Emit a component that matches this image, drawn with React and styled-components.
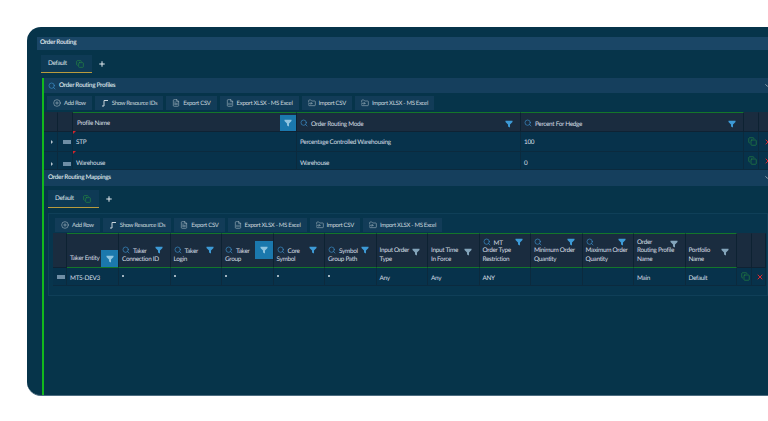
import styled, { createGlobalStyle } from "styled-components";
import { ChevronDown, CirclePlus, Copy, FileSpreadsheet, FileText, FolderInput, Plus, Search, X } from "lucide-react";

const Global = createGlobalStyle`
  html, body { margin: 0; padding: 0; background: #fff; overflow: hidden; }
  * { box-sizing: border-box; }
`;

const Page = styled.div`
  width: 768px;
  height: 421px;
  padding: 27px 0 0 27px;
  overflow: hidden;
  font-family: Lato, "Noto Sans", sans-serif;
  font-size: 6.4px;
  letter-spacing: -0.3px;
  text-rendering: geometricPrecision;
  color: #d5dee4;
`;

const Panel = styled.div`
  width: 741px;
  height: 369px;
  padding: 10px 0 0 10px;
  background: #06344a;
  border-radius: 14px 0 0 14px;
  border-bottom: 1px solid #4d6d80;
  overflow: hidden;
`;

const TitleBar = styled.div`
  height: 13px;
  background: #1a4666;
  padding: 0 0 3px 3px;
  display: flex;
  align-items: center;
  font-weight: 600;
  color: #e2e9ee;
`;

const Tabs = styled.div`
  height: 18px;
  margin: ${(p) => p.$top}px 0 0 ${(p) => p.$left}px;
  display: flex;
  align-items: center;
  gap: 6px;
`;

const Tab = styled.div`
  width: 51px;
  height: 18px;
  padding-left: 7px;
  display: flex;
  align-items: center;
  gap: 9px;
  background: #0e3a55;
  border-bottom: 1.5px solid #b99b3d;
  color: #dbe3e8;
`;

const Rail = styled.div`
  margin: 5px 0 0 5px;
  border-left: 2px solid #12b81c;
  height: 318px;
`;

const SectionBar = styled.div`
  height: ${(p) => p.$h}px;
  background: #153f5d;
  padding: 0 0 ${(p) => p.$lift || 0}px ${(p) => p.$pad}px;
  display: flex;
  align-items: center;
  font-weight: 600;
  color: #dbe3e8;
`;

const SectionTitle = styled.span`
  flex: 1;
`;

const Toolbar = styled.div`
  height: ${(p) => p.$h}px;
  padding: ${(p) => p.$pad};
  display: flex;
  align-items: center;
  gap: 3px;
`;

const ToolButton = styled.div`
  height: 14px;
  padding: 1px 6px 0;
  display: flex;
  align-items: center;
  gap: 3px;
  background: #123c58;
  font-size: 6px;
  white-space: nowrap;
  color: #c9d5dc;
`;

const Grid = styled.div`
  display: grid;
  grid-template-columns: ${(p) => p.$cols};
  width: max-content;
`;

const HeadCell = styled.div`
  height: ${(p) => p.$h}px;
  background: #1a2c3f;
  border-top: 1px solid ${(p) => (p.$plain ? "#1a2c3f" : "#14762a")};
  border-bottom: 1px solid ${(p) => (p.$mapped ? "#14762a" : "#0f2233")};
  border-right: 1px solid #0d2232;
  display: flex;
  align-items: flex-end;
  padding-left: ${(p) => p.$pad || 3}px;
  color: #d5dee4;
`;

const HeadInner = styled.div`
  width: 100%;
  display: flex;
  align-items: flex-start;
  justify-content: space-between;
  line-height: 8.3px;
  padding-bottom: ${(p) => p.$bottom}px;
`;

const HeadLabel = styled.span`
  display: block;
  flex: 1;
  min-width: 0;
  white-space: pre;
  padding-top: ${(p) => p.$top || 0}px;
`;

const SearchMark = styled(Search)`
  display: inline-block;
  color: #3d8fca;
  vertical-align: -1.5px;
  margin-right: 3px;
`;

const FilterBox = styled.span`
  flex: none;
  width: ${(p) => (p.$active ? p.$size : 16)}px;
  height: ${(p) => (p.$active ? p.$size : 9)}px;
  margin: ${(p) => (p.$active ? `-${p.$lift}px 0 -${p.$drop}px 0` : "0 3px 0 0")};
  display: flex;
  align-items: center;
  justify-content: center;
  background: ${(p) => (p.$active ? "#1b78ad" : "transparent")};
`;

const Funnel = ({ color }) => (
  <svg width="8" height="8" viewBox="0 0 8 8" aria-hidden="true">
    <path d="M0.5 0.8h7v1.2L5 4.5V7.6L3 6.6V4.5L0.5 2z" fill={color} />
  </svg>
);

const BodyCell = styled.div`
  height: ${(p) => p.$h}px;
  border-right: 1px solid #0b2a3e;
  border-bottom: 1px solid #0b2a3e;
  background: #07324b;
  padding: ${(p) => p.$top || 0}px 0 0 3px;
  display: flex;
  align-items: center;
  justify-content: ${(p) => (p.$center ? "center" : "flex-start")};
  position: relative;
  color: #d5dee4;
`;

const RedCorner = styled.i`
  position: absolute;
  left: 0;
  top: -1px;
  border-top: 3px solid #d1242b;
  border-right: 3px solid transparent;
`;

const Dot = styled.i`
  width: 2px;
  height: 2px;
  margin-top: -2px;
  border-radius: 50%;
  background: #d5dee4;
`;

const Arrow = styled.i`
  border-left: 2.5px solid #b6c4ce;
  border-top: 2px solid transparent;
  border-bottom: 2px solid transparent;
`;

const RowMark = styled.i`
  width: 8px;
  height: 4px;
  background: #6f8ea5;
`;

const Mapped = styled.div`
  margin: 5px 0 0 4px;
  height: 83px;
  padding: 3px 0 0 4px;
  border: 1px solid #0f3f58;
  background: #07354d;
`;

const ChevronMark = styled(ChevronDown)`
  margin-right: -3px;
  color: #e2e9ee;
`;

const green = "#2e9a3e";
const red = "#e0262d";

const buttons = [
  [CirclePlus, "Add Row"],
  [null, "Show Resource IDs"],
  [FileText, "Export CSV"],
  [FileSpreadsheet, "Export XLSX - MS Excel"],
  [FolderInput, "Import CSV"],
  [FolderInput, "Import XLSX - MS Excel"],
];

const ToolRow = () =>
  buttons.map(([Icon, label]) => (
    <ToolButton key={label}>
      {Icon ? (
        <Icon size={8} strokeWidth={1.4} />
      ) : (
        <svg width="8" height="8" viewBox="0 0 8 8" fill="none" stroke="currentColor" aria-hidden="true">
          <path d="M1 7h2V1.5h4" />
        </svg>
      )}
      {label}
    </ToolButton>
  ));

const mappingHeads = [
  { label: "Taker Entity", active: true, size: 17, lift: 5, drop: 3, bottom: 3 },
  { label: "Taker\nConnection ID", search: true },
  { label: "Taker\nLogin", search: true },
  { label: "Taker\nGroup", search: true, active: true, size: 18, lift: 5, drop: 4 },
  { label: "Core\nSymbol", search: true },
  { label: "Symbol\nGroup Path", search: true },
  { label: "Input Order\nType", dim: true },
  { label: "Input Time\nIn Force", dim: true },
  { label: "MT\nOrder Type\nRestriction", search: true },
  { label: "\nMinimum Order\nQuantity", search: true },
  { label: "\nMaximum Order\nQuantity", search: true },
  { label: "Order\nRouting Profile\nName", dim: true },
  { label: "Portfolio\nName", dim: true },
];

const mappingRow = ["MT5-DEV3", "*", "*", "*", "*", "*", "Any", "Any", "ANY", "", "", "Main", "Default"];

const Actions = ({ h }) => (
  <>
    <BodyCell $h={h} $center>
      <Copy size={9} color={green} strokeWidth={1.4} />
    </BodyCell>
    <BodyCell $h={h} $center>
      <X size={8} color={red} strokeWidth={3} />
    </BodyCell>
  </>
);

const profiles = [
  { name: "STP", mode: "Percentage Controlled Warehousing", hedge: "100", h: 20, top: 1 },
  { name: "Warehouse", mode: "Warehouse", hedge: "0", h: 18, top: 6 },
];

export default function App() {
  return (
    <Page>
      <Global />
      <Panel>
        <TitleBar>Order Routing</TitleBar>
        <Tabs $top={5} $left={4}>
          <Tab>
            Default
            <Copy size={8} color={green} strokeWidth={1.6} />
          </Tab>
          <Plus size={8} strokeWidth={3} color="#e5ecf0" />
        </Tabs>
        <Rail>
          <SectionBar $h={15} $pad={4}>
            <SearchMark size={8} />
            <SectionTitle>Order Routing Profiles</SectionTitle>
            <ChevronMark size={7} />
          </SectionBar>
          <Toolbar $h={19} $pad="0 0 0 3px">
            <ToolRow />
          </Toolbar>
          <Grid $cols="14px 15px 224px 224px 223px 15px 15px">
            <HeadCell $h={20} $plain />
            <HeadCell $h={20} $plain />
            <HeadCell $h={20} $pad={4}>
              <HeadInner $bottom={0}>
                <HeadLabel $top={5}>Profile Name</HeadLabel>
                <FilterBox $active $size={16} $lift={0} $drop={0}>
                  <Funnel color="#8fc4e0" />
                </FilterBox>
              </HeadInner>
            </HeadCell>
            <HeadCell $h={20}>
              <HeadInner $bottom={2}>
                <HeadLabel>
                  <SearchMark size={8} />
                  Order Routing Mode
                </HeadLabel>
                <FilterBox>
                  <Funnel color="#3d9ad6" />
                </FilterBox>
              </HeadInner>
            </HeadCell>
            <HeadCell $h={20}>
              <HeadInner $bottom={2}>
                <HeadLabel>
                  <SearchMark size={8} />
                  Percent For Hedge
                </HeadLabel>
                <FilterBox>
                  <Funnel color="#3d9ad6" />
                </FilterBox>
              </HeadInner>
            </HeadCell>
            <HeadCell $h={20} $plain />
            <HeadCell $h={20} $plain />
            {profiles.map((row) => (
              <Row key={row.name} row={row} />
            ))}
          </Grid>
          <SectionBar $h={16} $pad={4} $lift={1}>
            <SectionTitle>Order Routing Mappings</SectionTitle>
            <ChevronMark size={7} />
          </SectionBar>
          <Tabs $top={4} $left={4}>
            <Tab>
              Default
              <Copy size={8} color={green} strokeWidth={1.6} />
            </Tab>
            <Plus size={8} strokeWidth={3} color="#e5ecf0" />
          </Tabs>
          <Mapped>
            <Toolbar $h={16} $pad="0 0 1px 2px">
              <ToolRow />
            </Toolbar>
            <Grid $cols="14px 52px repeat(12, 51.5px) 15px 14px">
              <HeadCell $h={35} $plain />
              {mappingHeads.map((head) => (
                <HeadCell key={head.label} $h={35} $mapped $pad={3}>
                  <HeadInner $bottom={head.bottom ?? 3}>
                    <HeadLabel>
                      {head.search && <SearchMark size={8} />}
                      {head.label}
                    </HeadLabel>
                    <FilterBox $active={head.active} $size={head.size} $lift={head.lift} $drop={head.drop}>
                      <Funnel color={head.active ? "#8fc4e0" : head.dim ? "#83a4ba" : "#3d9ad6"} />
                    </FilterBox>
                  </HeadInner>
                </HeadCell>
              ))}
              <HeadCell $h={35} $plain />
              <HeadCell $h={35} $plain />
              <BodyCell $h={18} $center>
                <RowMark />
              </BodyCell>
              {mappingRow.map((value, i) => (
                <BodyCell key={i} $h={18} $top={value === "*" ? 0 : 3}>
                  {value === "*" ? <Dot /> : value}
                </BodyCell>
              ))}
              <Actions h={18} />
            </Grid>
          </Mapped>
        </Rail>
      </Panel>
    </Page>
  );
}

function Row({ row }) {
  return (
    <>
      <BodyCell $h={row.h} $center $top={row.top}>
        <Arrow />
      </BodyCell>
      <BodyCell $h={row.h} $center $top={row.top}>
        <RowMark />
      </BodyCell>
      <BodyCell $h={row.h} $top={row.top}>
        <RedCorner />
        {row.name}
      </BodyCell>
      <BodyCell $h={row.h} $top={row.top}>{row.mode}</BodyCell>
      <BodyCell $h={row.h} $top={row.top}>{row.hedge}</BodyCell>
      <Actions h={row.h} />
    </>
  );
}
